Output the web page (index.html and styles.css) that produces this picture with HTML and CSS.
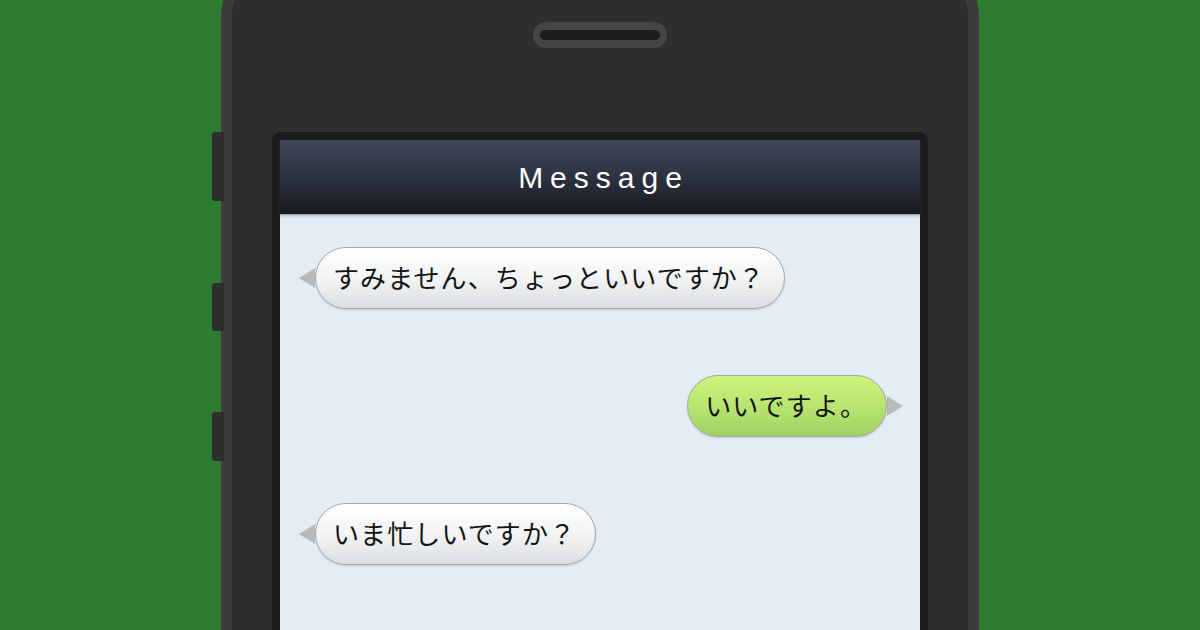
FILE: index.html
```html
<!DOCTYPE html>
<html lang="ja">
<head>
<meta charset="utf-8">
<title>Message</title>
<link rel="stylesheet" href="styles.css">
</head>
<body>
<div class="stage">
  <div class="phone">
    <span class="side-btn btn-1"></span>
    <span class="side-btn btn-2"></span>
    <span class="side-btn btn-3"></span>
    <div class="speaker"><span class="speaker-slot"></span></div>
    <div class="bezel">
      <div class="screen">
        <header class="titlebar">Message</header>
        <div class="chat">
          <div class="bubble in">すみません、ちょっといいですか？</div>
          <div class="bubble out">いいですよ。</div>
          <div class="bubble in">いま忙しいですか？</div>
          <div class="bubble out next" aria-hidden="true"></div>
        </div>
      </div>
    </div>
  </div>
</div>
</body>
</html>
```

FILE: styles.css
```css
html, body {
  margin: 0;
  padding: 0;
}
body {
  background: #2e7b32;
  width: 1200px;
  height: 630px;
  overflow: hidden;
  font-family: "Liberation Sans", "Noto Sans CJK JP", sans-serif;
}
.stage {
  display: flex;
  justify-content: center;
}
.phone {
  position: relative;
  box-sizing: border-box;
  width: 758px;
  height: 720px;
  margin-top: -40px;
  background: #2e2e2e;
  border: 11px solid #3c3c3c;
  border-bottom: none;
  border-radius: 56px 56px 0 0;
  padding: 51px 40px 0;
  display: flex;
  flex-direction: column;
  align-items: center;
}
.side-btn {
  position: absolute;
  left: -20px;
  width: 12px;
  background: #2e2e2e;
  border-radius: 3px 0 0 3px;
}
.btn-1 { top: 161px; height: 69px; }
.btn-2 { top: 312px; height: 48px; }
.btn-3 { top: 441px; height: 49px; }
.speaker {
  box-sizing: border-box;
  width: 134px;
  height: 26px;
  background: #454545;
  border-radius: 13px;
  padding: 8px 7px;
}
.speaker-slot {
  display: block;
  height: 10px;
  background: #1c1c1c;
  border-radius: 5px;
}
.bezel {
  align-self: stretch;
  margin-top: 84px;
  flex: 1;
  background: #1c1c1c;
  border-radius: 9px 9px 0 0;
  padding: 8px 8px 0;
  display: flex;
}
.screen {
  flex: 1;
  background: #e3edf6;
  display: flex;
  flex-direction: column;
}
.titlebar {
  height: 74px;
  box-sizing: border-box;
  background: linear-gradient(to bottom, #3e4659 0%, #2c3240 50%, #181a21 100%);
  color: #ffffff;
  font-family: "Liberation Sans", "Noto Sans", sans-serif;
  font-size: 30px;
  letter-spacing: 7px;
  text-indent: 7px;
  text-align: center;
  line-height: 76px;
  box-shadow: 0 1px 0 #9ea8b4, 0 2px 3px rgba(60, 80, 100, 0.35);
  position: relative;
  z-index: 1;
}
.chat {
  display: flex;
  flex-direction: column;
  gap: 66px;
  padding: 33px 33px 0 35px;
}
.bubble {
  position: relative;
  box-sizing: border-box;
  height: 62px;
  padding: 0 19px 0 17px;
  border-radius: 31px;
  border: 1px solid #a3a6ab;
  font-family: "Noto Sans CJK JP", "Liberation Sans", sans-serif;
  font-size: 26px;
  letter-spacing: 1.1px;
  line-height: 58px;
  color: #141414;
  white-space: nowrap;
  box-shadow: 0 1px 2px rgba(0, 0, 0, 0.14);
}
.bubble::before {
  content: "";
  position: absolute;
  top: 20px;
  border-top: 10px solid transparent;
  border-bottom: 10px solid transparent;
}
.bubble.in {
  align-self: flex-start;
  background: linear-gradient(to bottom, #ffffff 0%, #f4f5f6 45%, #dcdfe2 100%);
}
.bubble.in::before {
  left: -17px;
  border-right: 16px solid #b9b9b9;
}
.bubble.out {
  align-self: flex-end;
  background: linear-gradient(to bottom, #cef47c 0%, #b8e570 50%, #9ed263 100%);
}
.bubble.out::before {
  right: -17px;
  border-left: 16px solid #b9b9b9;
}
.bubble.next {
  width: 178px;
}
```
